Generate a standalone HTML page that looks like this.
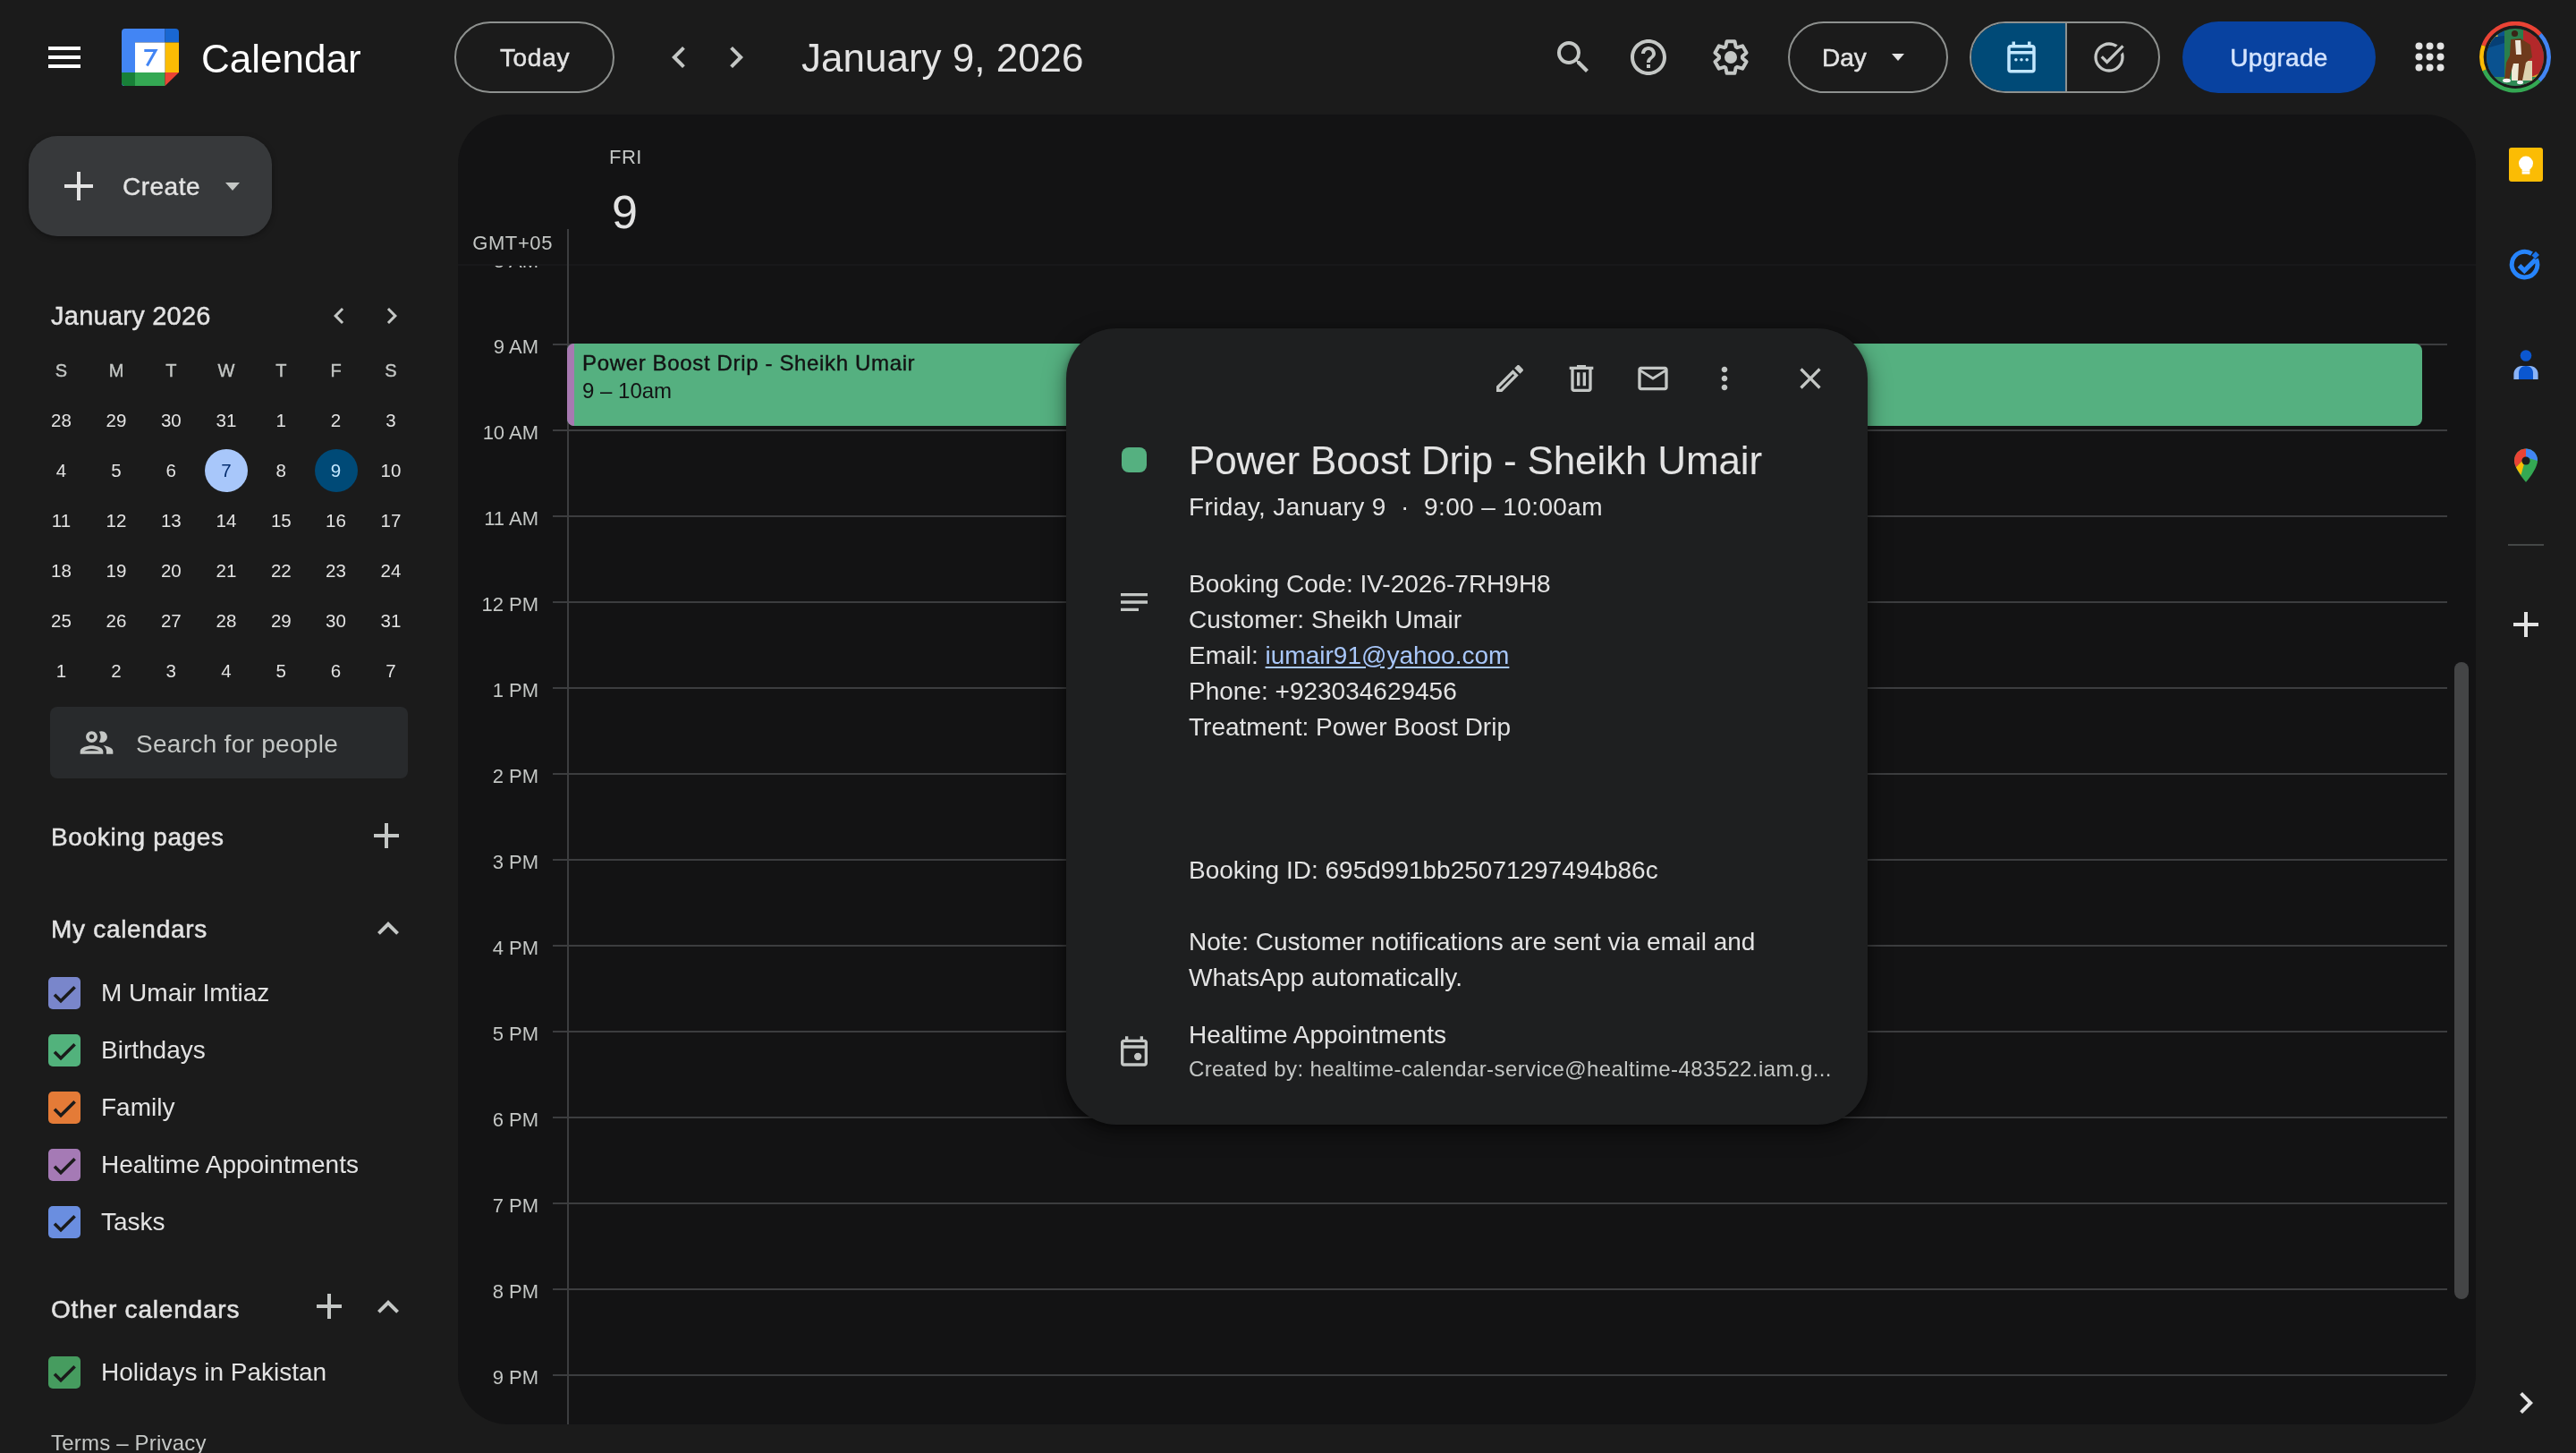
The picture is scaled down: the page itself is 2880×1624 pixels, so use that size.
<!DOCTYPE html>
<html><head><meta charset="utf-8"><title>Calendar</title>
<style>
body{will-change:transform;}
html,body{margin:0;padding:0;width:2880px;height:1624px;overflow:hidden;background:#1b1b1b;font-family:"Liberation Sans", sans-serif;}
.t{position:absolute;white-space:nowrap;}
.r{position:absolute;}
</style></head><body>

<svg class="r" style="left:48px;top:40px" width="48" height="48" viewBox="0 0 24 24"><path fill="#ffffff" d="M3 18h18v-2H3v2zm0-5h18v-2H3v2zm0-7v2h18V6H3z"/></svg>
<svg class="r" style="left:136px;top:32px" width="64" height="64" viewBox="0 0 64 64">
<path d="M4 0h44.5v15.5H15v49H4a4 4 0 0 1-4-4V4a4 4 0 0 1 4-4z" fill="#4285f4"/>
<path d="M48.5 0H60a4 4 0 0 1 4 4v11.5H48.5z" fill="#1967d2"/>
<rect x="48.5" y="15.5" width="15.5" height="33.5" fill="#fbbc04"/>
<rect x="15" y="49" width="33.5" height="15" fill="#34a853"/>
<path d="M0 49h15v15H4a4 4 0 0 1-4-4z" fill="#188038"/>
<path d="M48.5 49H64L48.5 64z" fill="#ea4335"/>
<rect x="15" y="15.5" width="33.5" height="33.5" fill="#fff"/>
<path d="M25.3 24.6H38L28.4 41.5" stroke="#4285f4" stroke-width="3" fill="none"/>
</svg>
<div class="t" style="left:225px;top:44.0px;font-size:44px;line-height:44px;color:#ffffff;">Calendar</div>
<div class="r" style="left:508px;top:24px;width:175px;height:76px;border:2px solid #8e918f;border-radius:40px;"></div>
<div class="t" style="left:509px;top:50.5px;font-size:28px;line-height:28px;color:#e3e3e3;text-align:center;width:178px;letter-spacing:0.7px;-webkit-text-stroke:0.5px #e3e3e3;">Today</div>
<svg class="r" style="left:735px;top:40px" width="48" height="48" viewBox="0 0 24 24"><path fill="#c4c7c5" d="M15.41 7.41L14 6l-6 6 6 6 1.41-1.41L10.83 12z"/></svg>
<svg class="r" style="left:799px;top:40px" width="48" height="48" viewBox="0 0 24 24"><path fill="#c4c7c5" d="M10 6L8.59 7.41 13.17 12l-4.58 4.59L10 18l6-6z"/></svg>
<div class="t" style="left:896px;top:43.0px;font-size:44px;line-height:44px;color:#e3e3e3;">January 9, 2026</div>
<svg class="r" style="left:1735px;top:40px" width="48" height="48" viewBox="0 0 24 24"><path fill="#c4c7c5" d="M15.5 14h-.79l-.28-.27A6.471 6.471 0 0 0 16 9.5 6.5 6.5 0 1 0 9.5 16c1.61 0 3.09-.59 4.23-1.57l.27.28v.79l5 4.99L20.49 19l-4.99-5zm-6 0C7.01 14 5 11.99 5 9.5S7.01 5 9.5 5 14 7.01 14 9.5 11.99 14 9.5 14z"/></svg>
<svg class="r" style="left:1819px;top:40px" width="48" height="48" viewBox="0 0 24 24"><path fill="#c4c7c5" d="M11 18h2v-2h-2v2zm1-16C6.48 2 2 6.48 2 12s4.48 10 10 10 10-4.48 10-10S17.52 2 12 2zm0 18c-4.41 0-8-3.59-8-8s3.59-8 8-8 8 3.59 8 8-3.59 8-8 8zm0-14c-2.21 0-4 1.790-4 4h2c0-1.1.9-2 2-2s2 .9 2 2c0 2-3 1.75-3 5h2c0-2.250 3-2.5 3-5 0-2.21-1.79-4-4-4z"/></svg>
<svg class="r" style="left:1911px;top:40px" width="48" height="48" viewBox="0 0 48 48"><path d="M18.30 12.32 L19.57 6.24 L28.43 6.24 L29.70 12.32 L31.27 13.22 L37.16 11.29 L41.59 18.96 L36.97 23.09 L36.97 24.91 L41.59 29.04 L37.16 36.71 L31.27 34.78 L29.70 35.68 L28.43 41.76 L19.57 41.76 L18.30 35.68 L16.73 34.78 L10.84 36.71 L6.41 29.04 L11.03 24.91 L11.03 23.09 L6.41 18.96 L10.84 11.29 L16.73 13.22Z" fill="none" stroke="#c4c7c5" stroke-width="4" stroke-linejoin="round"/><circle cx="24" cy="24" r="7" fill="#c4c7c5"/></svg>
<div class="r" style="left:1999px;top:24px;width:175px;height:76px;border:2px solid #8e918f;border-radius:40px;"></div>
<div class="t" style="left:2037px;top:50.5px;font-size:28px;line-height:28px;color:#e3e3e3;-webkit-text-stroke:0.5px #e3e3e3;">Day</div>
<svg class="r" style="left:2114px;top:59px" width="16" height="12" viewBox="0 0 16 12"><path d="M1 1h14l-7 8z" fill="#e3e3e3"/></svg>
<div class="r" style="left:2202px;top:24px;width:209px;height:76px;border:2px solid #8e918f;border-radius:40px;overflow:hidden;"><div style="position:absolute;left:0;top:0;width:105px;height:76px;background:#004a77"></div><div style="position:absolute;left:105px;top:0;width:2px;height:76px;background:#8e918f"></div></div>
<svg class="r" style="left:2239px;top:43px" width="42" height="42" viewBox="0 0 24 24"><path fill="#c2e7ff" d="M5 22c-.55 0-1.02-.2-1.41-.59A1.93 1.93 0 0 1 3 20V6c0-.55.2-1.02.59-1.41C3.98 4.2 4.45 4 5 4h1V2h2v2h8V2h2v2h1c.55 0 1.02.2 1.41.59.39.39.59.86.59 1.41v14c0 .55-.2 1.02-.59 1.41-.39.39-.86.59-1.41.59H5zm0-2h14V10H5v10zM5 8h14V6H5v2z"/><circle cx="8.5" cy="13.5" r="1" fill="#c2e7ff"/><circle cx="12" cy="13.5" r="1" fill="#c2e7ff"/><circle cx="15.5" cy="13.5" r="1" fill="#c2e7ff"/></svg>
<svg class="r" style="left:2338px;top:44px" width="40" height="40" viewBox="0 0 24 24"><path fill="#c4c7c5" d="M12 22c-1.38 0-2.68-.26-3.9-.79a10.1 10.1 0 0 1-3.18-2.14 10.1 10.1 0 0 1-2.14-3.17C2.26 14.68 2 13.38 2 12s.26-2.68.79-3.9a10.1 10.1 0 0 1 2.14-3.18A10.1 10.1 0 0 1 8.1 2.79C9.32 2.26 10.62 2 12 2c1.08 0 2.1.16 3.08.48.97.31 1.86.75 2.67 1.32L16.3 5.28c-.63-.4-1.31-.71-2.03-.94A7.73 7.73 0 0 0 12 4C9.78 4 7.9 4.78 6.34 6.34 4.78 7.9 4 9.78 4 12s.78 4.1 2.34 5.66C7.9 19.22 9.78 20 12 20s4.1-.78 5.66-2.34C19.22 16.1 20 14.22 20 12c0-.3-.02-.6-.05-.9a7.4 7.4 0 0 0-.15-.88l1.63-1.62c.18.53.33 1.08.42 1.65.1.57.15 1.15.15 1.75 0 1.38-.26 2.68-.79 3.9a10.1 10.1 0 0 1-2.14 3.18 10.1 10.1 0 0 1-3.17 2.14c-1.22.52-2.52.78-3.9.78zm-1.4-5.4l-4.25-4.25 1.4-1.4 2.85 2.85 10-10.03 1.4 1.4L10.6 16.6z"/></svg>
<div class="r" style="left:2440px;top:24px;width:216px;height:80px;background:#0842a0;border-radius:40px;"></div>
<div class="t" style="left:2440px;top:50.5px;font-size:28px;line-height:28px;color:#d3e3fd;text-align:center;width:216px;letter-spacing:0.3px;-webkit-text-stroke:0.5px #d3e3fd;">Upgrade</div>
<svg class="r" style="left:2700px;top:47px" width="33" height="33" viewBox="-0.5 -0.5 33 33"><circle cx="4" cy="4" r="4" fill="#e3e3e3"/><circle cx="4" cy="16" r="4" fill="#e3e3e3"/><circle cx="4" cy="28" r="4" fill="#e3e3e3"/><circle cx="16" cy="4" r="4" fill="#e3e3e3"/><circle cx="16" cy="16" r="4" fill="#e3e3e3"/><circle cx="16" cy="28" r="4" fill="#e3e3e3"/><circle cx="28" cy="4" r="4" fill="#e3e3e3"/><circle cx="28" cy="16" r="4" fill="#e3e3e3"/><circle cx="28" cy="28" r="4" fill="#e3e3e3"/></svg>
<svg class="r" style="left:2772px;top:24px" width="80" height="80" viewBox="0 0 80 80">
<defs><clipPath id="av"><circle cx="40" cy="40" r="32"/></clipPath></defs>
<path d="M4.6 27 A37.7 37.7 0 0 1 68 14.5" stroke="#ea4335" stroke-width="4.6" fill="none"/>
<path d="M68 14.5 A37.7 37.7 0 0 1 67 66" stroke="#4285f4" stroke-width="4.6" fill="none"/>
<path d="M67 66 A37.7 37.7 0 0 1 5.5 54.5" stroke="#34a853" stroke-width="4.6" fill="none"/>
<path d="M5.5 54.5 A37.7 37.7 0 0 1 4.6 27" stroke="#fbbc04" stroke-width="4.6" fill="none"/>
<g clip-path="url(#av)">
<rect x="0" y="0" width="80" height="80" fill="#2a7f4c"/>
<rect x="0" y="0" width="28" height="80" fill="#0a5290"/>
<path d="M8 22 L20 14 L22 21 L8 28z" fill="#d8b93a"/>
<path d="M8 18 L28 16 L28 24 L8 30z" fill="#063f74"/>
<rect x="49" y="0" width="31" height="80" fill="#b3282a"/>
<path d="M58 62 L72 56 L72 72 L58 72z" fill="#d6a82a"/>
<rect x="0" y="62" width="80" height="18" fill="#2f8a55"/>
<rect x="36" y="44" width="23" height="22" fill="#dcd2b0"/>
<rect x="36" y="44" width="9" height="22" fill="#efe9d6"/>
<circle cx="39.5" cy="13.5" r="3.6" fill="#3a2416"/>
<path d="M35 20 L46 19 L57 26 L59 40 L52 46 L48 66 L43 66 L44 47 L38 47 L33 66 L28 66 L30 46 L34 38z" fill="#6e3a1c"/>
<path d="M40 21 L46 21 L47 37 L41 37z" fill="#ece6da"/>
<ellipse cx="30.5" cy="66" rx="4.5" ry="2.2" fill="#f2f2f2"/>
<ellipse cx="45.5" cy="68" rx="3.5" ry="2.2" fill="#f2f2f2"/>
</g></svg>
<div class="r" style="left:32px;top:152px;width:272px;height:112px;background:#37393b;border-radius:32px;box-shadow:0 2px 6px rgba(0,0,0,.35);"></div>
<div class="r" style="left:72px;top:206px;width:32px;height:4px;background:#e3e3e3;border-radius:0px;"></div>
<div class="r" style="left:86px;top:192px;width:4px;height:32px;background:#e3e3e3;border-radius:0px;"></div>
<div class="t" style="left:137px;top:194.5px;font-size:28px;line-height:28px;color:#e3e3e3;letter-spacing:0.5px;-webkit-text-stroke:0.4px #e3e3e3;">Create</div>
<svg class="r" style="left:250px;top:201px" width="20" height="16" viewBox="0 0 20 16"><path d="M2 3h16l-8 9z" fill="#c4c7c5"/></svg>
<div class="t" style="left:57px;top:338.8px;font-size:29px;line-height:29px;color:#e3e3e3;letter-spacing:0.25px;-webkit-text-stroke:0.4px #e3e3e3;">January 2026</div>
<svg class="r" style="left:361px;top:334.5px" width="36" height="36" viewBox="0 0 24 24"><path fill="#c4c7c5" d="M15.41 7.41L14 6l-6 6 6 6 1.41-1.41L10.83 12z"/></svg>
<svg class="r" style="left:419.5px;top:334.5px" width="36" height="36" viewBox="0 0 24 24"><path fill="#c4c7c5" d="M10 6L8.59 7.41 13.17 12l-4.58 4.59L10 18l6-6z"/></svg>
<div class="t" style="left:38.5px;top:403.5px;font-size:20px;line-height:20px;color:#c4c7c5;text-align:center;width:60px;-webkit-text-stroke:0.4px #c4c7c5;">S</div>
<div class="t" style="left:100px;top:403.5px;font-size:20px;line-height:20px;color:#c4c7c5;text-align:center;width:60px;-webkit-text-stroke:0.4px #c4c7c5;">M</div>
<div class="t" style="left:161.3px;top:403.5px;font-size:20px;line-height:20px;color:#c4c7c5;text-align:center;width:60px;-webkit-text-stroke:0.4px #c4c7c5;">T</div>
<div class="t" style="left:223px;top:403.5px;font-size:20px;line-height:20px;color:#c4c7c5;text-align:center;width:60px;-webkit-text-stroke:0.4px #c4c7c5;">W</div>
<div class="t" style="left:284.3px;top:403.5px;font-size:20px;line-height:20px;color:#c4c7c5;text-align:center;width:60px;-webkit-text-stroke:0.4px #c4c7c5;">T</div>
<div class="t" style="left:345.5px;top:403.5px;font-size:20px;line-height:20px;color:#c4c7c5;text-align:center;width:60px;-webkit-text-stroke:0.4px #c4c7c5;">F</div>
<div class="t" style="left:407px;top:403.5px;font-size:20px;line-height:20px;color:#c4c7c5;text-align:center;width:60px;-webkit-text-stroke:0.4px #c4c7c5;">S</div>
<div class="t" style="left:38.5px;top:460.0px;font-size:20.5px;line-height:20.5px;color:#e3e3e3;text-align:center;width:60px;">28</div>
<div class="t" style="left:100px;top:460.0px;font-size:20.5px;line-height:20.5px;color:#e3e3e3;text-align:center;width:60px;">29</div>
<div class="t" style="left:161.3px;top:460.0px;font-size:20.5px;line-height:20.5px;color:#e3e3e3;text-align:center;width:60px;">30</div>
<div class="t" style="left:223px;top:460.0px;font-size:20.5px;line-height:20.5px;color:#e3e3e3;text-align:center;width:60px;">31</div>
<div class="t" style="left:284.3px;top:460.0px;font-size:20.5px;line-height:20.5px;color:#e3e3e3;text-align:center;width:60px;">1</div>
<div class="t" style="left:345.5px;top:460.0px;font-size:20.5px;line-height:20.5px;color:#e3e3e3;text-align:center;width:60px;">2</div>
<div class="t" style="left:407px;top:460.0px;font-size:20.5px;line-height:20.5px;color:#e3e3e3;text-align:center;width:60px;">3</div>
<div class="t" style="left:38.5px;top:516.0px;font-size:20.5px;line-height:20.5px;color:#e3e3e3;text-align:center;width:60px;">4</div>
<div class="t" style="left:100px;top:516.0px;font-size:20.5px;line-height:20.5px;color:#e3e3e3;text-align:center;width:60px;">5</div>
<div class="t" style="left:161.3px;top:516.0px;font-size:20.5px;line-height:20.5px;color:#e3e3e3;text-align:center;width:60px;">6</div>
<div class="r" style="left:229px;top:502px;width:48px;height:48px;background:#a8c7fa;border-radius:24px;"></div>
<div class="t" style="left:223px;top:516.0px;font-size:20.5px;line-height:20.5px;color:#062e6f;text-align:center;width:60px;">7</div>
<div class="t" style="left:284.3px;top:516.0px;font-size:20.5px;line-height:20.5px;color:#e3e3e3;text-align:center;width:60px;">8</div>
<div class="r" style="left:351.5px;top:502px;width:48px;height:48px;background:#004a77;border-radius:24px;"></div>
<div class="t" style="left:345.5px;top:516.0px;font-size:20.5px;line-height:20.5px;color:#c2e7ff;text-align:center;width:60px;">9</div>
<div class="t" style="left:407px;top:516.0px;font-size:20.5px;line-height:20.5px;color:#e3e3e3;text-align:center;width:60px;">10</div>
<div class="t" style="left:38.5px;top:572.0px;font-size:20.5px;line-height:20.5px;color:#e3e3e3;text-align:center;width:60px;">11</div>
<div class="t" style="left:100px;top:572.0px;font-size:20.5px;line-height:20.5px;color:#e3e3e3;text-align:center;width:60px;">12</div>
<div class="t" style="left:161.3px;top:572.0px;font-size:20.5px;line-height:20.5px;color:#e3e3e3;text-align:center;width:60px;">13</div>
<div class="t" style="left:223px;top:572.0px;font-size:20.5px;line-height:20.5px;color:#e3e3e3;text-align:center;width:60px;">14</div>
<div class="t" style="left:284.3px;top:572.0px;font-size:20.5px;line-height:20.5px;color:#e3e3e3;text-align:center;width:60px;">15</div>
<div class="t" style="left:345.5px;top:572.0px;font-size:20.5px;line-height:20.5px;color:#e3e3e3;text-align:center;width:60px;">16</div>
<div class="t" style="left:407px;top:572.0px;font-size:20.5px;line-height:20.5px;color:#e3e3e3;text-align:center;width:60px;">17</div>
<div class="t" style="left:38.5px;top:628.0px;font-size:20.5px;line-height:20.5px;color:#e3e3e3;text-align:center;width:60px;">18</div>
<div class="t" style="left:100px;top:628.0px;font-size:20.5px;line-height:20.5px;color:#e3e3e3;text-align:center;width:60px;">19</div>
<div class="t" style="left:161.3px;top:628.0px;font-size:20.5px;line-height:20.5px;color:#e3e3e3;text-align:center;width:60px;">20</div>
<div class="t" style="left:223px;top:628.0px;font-size:20.5px;line-height:20.5px;color:#e3e3e3;text-align:center;width:60px;">21</div>
<div class="t" style="left:284.3px;top:628.0px;font-size:20.5px;line-height:20.5px;color:#e3e3e3;text-align:center;width:60px;">22</div>
<div class="t" style="left:345.5px;top:628.0px;font-size:20.5px;line-height:20.5px;color:#e3e3e3;text-align:center;width:60px;">23</div>
<div class="t" style="left:407px;top:628.0px;font-size:20.5px;line-height:20.5px;color:#e3e3e3;text-align:center;width:60px;">24</div>
<div class="t" style="left:38.5px;top:684.0px;font-size:20.5px;line-height:20.5px;color:#e3e3e3;text-align:center;width:60px;">25</div>
<div class="t" style="left:100px;top:684.0px;font-size:20.5px;line-height:20.5px;color:#e3e3e3;text-align:center;width:60px;">26</div>
<div class="t" style="left:161.3px;top:684.0px;font-size:20.5px;line-height:20.5px;color:#e3e3e3;text-align:center;width:60px;">27</div>
<div class="t" style="left:223px;top:684.0px;font-size:20.5px;line-height:20.5px;color:#e3e3e3;text-align:center;width:60px;">28</div>
<div class="t" style="left:284.3px;top:684.0px;font-size:20.5px;line-height:20.5px;color:#e3e3e3;text-align:center;width:60px;">29</div>
<div class="t" style="left:345.5px;top:684.0px;font-size:20.5px;line-height:20.5px;color:#e3e3e3;text-align:center;width:60px;">30</div>
<div class="t" style="left:407px;top:684.0px;font-size:20.5px;line-height:20.5px;color:#e3e3e3;text-align:center;width:60px;">31</div>
<div class="t" style="left:38.5px;top:740.0px;font-size:20.5px;line-height:20.5px;color:#e3e3e3;text-align:center;width:60px;">1</div>
<div class="t" style="left:100px;top:740.0px;font-size:20.5px;line-height:20.5px;color:#e3e3e3;text-align:center;width:60px;">2</div>
<div class="t" style="left:161.3px;top:740.0px;font-size:20.5px;line-height:20.5px;color:#e3e3e3;text-align:center;width:60px;">3</div>
<div class="t" style="left:223px;top:740.0px;font-size:20.5px;line-height:20.5px;color:#e3e3e3;text-align:center;width:60px;">4</div>
<div class="t" style="left:284.3px;top:740.0px;font-size:20.5px;line-height:20.5px;color:#e3e3e3;text-align:center;width:60px;">5</div>
<div class="t" style="left:345.5px;top:740.0px;font-size:20.5px;line-height:20.5px;color:#e3e3e3;text-align:center;width:60px;">6</div>
<div class="t" style="left:407px;top:740.0px;font-size:20.5px;line-height:20.5px;color:#e3e3e3;text-align:center;width:60px;">7</div>
<div class="r" style="left:56px;top:790px;width:400px;height:80px;background:#282a2c;border-radius:8px;"></div>
<svg class="r" style="left:85.8px;top:808.3px" width="44" height="44" viewBox="0 0 24 24"><path fill="#c4c7c5" d="M9 13.75c-2.34 0-7 1.17-7 3.5V19h14v-1.75c0-2.33-4.66-3.5-7-3.5zM4.34 17c.84-.58 2.87-1.25 4.66-1.25s3.82.67 4.66 1.25H4.34zM9 12c1.93 0 3.5-1.57 3.5-3.5S10.93 5 9 5 5.5 6.57 5.5 8.5 7.07 12 9 12zm0-5c.83 0 1.5.67 1.5 1.5S9.83 10 9 10s-1.5-.67-1.5-1.5S8.17 7 9 7zm7.04 6.81c1.16.84 1.96 1.96 1.96 3.44V19h4v-1.75c0-2.02-3.5-3.17-5.96-3.44zM15 12c1.93 0 3.5-1.57 3.5-3.5S16.930 5 15 5c-.54 0-1.04.13-1.5.35.63.89 1 1.98 1 3.15s-.37 2.26-1 3.15c.46.22.96.35 1.5.35z"/></svg>
<div class="t" style="left:152px;top:817.5px;font-size:28px;line-height:28px;color:#c4c7c5;letter-spacing:0.3px;">Search for people</div>
<div class="t" style="left:57px;top:921.5px;font-size:28px;line-height:28px;color:#e3e3e3;letter-spacing:0.65px;-webkit-text-stroke:0.5px #e3e3e3;">Booking pages</div>
<svg class="r" style="left:408px;top:910px" width="48" height="48" viewBox="0 0 24 24"><path fill="#c4c7c5" d="M19 13h-6v6h-2v-6H5v-2h6V5h2v6h6v2z"/></svg>
<div class="t" style="left:57px;top:1025.0px;font-size:28px;line-height:28px;color:#e3e3e3;letter-spacing:0.7px;-webkit-text-stroke:0.5px #e3e3e3;">My calendars</div>
<svg class="r" style="left:410px;top:1014px" width="48" height="48" viewBox="0 0 24 24"><path fill="#c4c7c5" d="M12 8l-6 6 1.41 1.41L12 10.83l4.59 4.58L18 14z"/></svg>
<svg class="r" style="left:54px;top:1092px" width="36" height="36" viewBox="0 0 36 36"><rect width="36" height="36" rx="5" fill="#7986cb"/><path d="M7 19.8l7 7 15.6-15.6" stroke="#1b1b1b" stroke-width="3.6" fill="none"/></svg>
<div class="t" style="left:113px;top:1095.5px;font-size:28px;line-height:28px;color:#e3e3e3;">M Umair Imtiaz</div>
<svg class="r" style="left:54px;top:1156px" width="36" height="36" viewBox="0 0 36 36"><rect width="36" height="36" rx="5" fill="#52b27c"/><path d="M7 19.8l7 7 15.6-15.6" stroke="#1b1b1b" stroke-width="3.6" fill="none"/></svg>
<div class="t" style="left:113px;top:1159.5px;font-size:28px;line-height:28px;color:#e3e3e3;">Birthdays</div>
<svg class="r" style="left:54px;top:1220px" width="36" height="36" viewBox="0 0 36 36"><rect width="36" height="36" rx="5" fill="#e47b37"/><path d="M7 19.8l7 7 15.6-15.6" stroke="#1b1b1b" stroke-width="3.6" fill="none"/></svg>
<div class="t" style="left:113px;top:1223.5px;font-size:28px;line-height:28px;color:#e3e3e3;">Family</div>
<svg class="r" style="left:54px;top:1284px" width="36" height="36" viewBox="0 0 36 36"><rect width="36" height="36" rx="5" fill="#a57ab5"/><path d="M7 19.8l7 7 15.6-15.6" stroke="#1b1b1b" stroke-width="3.6" fill="none"/></svg>
<div class="t" style="left:113px;top:1287.5px;font-size:28px;line-height:28px;color:#e3e3e3;">Healtime Appointments</div>
<svg class="r" style="left:54px;top:1348px" width="36" height="36" viewBox="0 0 36 36"><rect width="36" height="36" rx="5" fill="#6a8ee0"/><path d="M7 19.8l7 7 15.6-15.6" stroke="#1b1b1b" stroke-width="3.6" fill="none"/></svg>
<div class="t" style="left:113px;top:1351.5px;font-size:28px;line-height:28px;color:#e3e3e3;">Tasks</div>
<svg class="r" style="left:54px;top:1516px" width="36" height="36" viewBox="0 0 36 36"><rect width="36" height="36" rx="5" fill="#469c5f"/><path d="M7 19.8l7 7 15.6-15.6" stroke="#1b1b1b" stroke-width="3.6" fill="none"/></svg>
<div class="t" style="left:113px;top:1519.5px;font-size:28px;line-height:28px;color:#e3e3e3;">Holidays in Pakistan</div>
<div class="t" style="left:57px;top:1449.5px;font-size:28px;line-height:28px;color:#e3e3e3;letter-spacing:0.8px;-webkit-text-stroke:0.5px #e3e3e3;">Other calendars</div>
<svg class="r" style="left:344px;top:1436px" width="48" height="48" viewBox="0 0 24 24"><path fill="#c4c7c5" d="M19 13h-6v6h-2v-6H5v-2h6V5h2v6h6v2z"/></svg>
<svg class="r" style="left:410px;top:1437px" width="48" height="48" viewBox="0 0 24 24"><path fill="#c4c7c5" d="M12 8l-6 6 1.41 1.41L12 10.83l4.59 4.58L18 14z"/></svg>
<div class="t" style="left:57px;top:1600.8px;font-size:24px;line-height:24px;color:#c4c7c5;letter-spacing:0.2px;">Terms – Privacy</div>
<div class="r" style="left:512px;top:128px;width:2256px;height:1464px;background:#131314;border-radius:56px;overflow:hidden;">
<div class="t" style="left:169px;top:36.5px;font-size:22px;line-height:22px;color:#c4c7c5;letter-spacing:0.5px;">FRI</div>
<div class="t" style="left:172px;top:83.3px;font-size:52px;line-height:52px;color:#e3e3e3;">9</div>
<div class="t" style="left:-112px;width:218px;text-align:right;top:132.5px;font-size:22px;line-height:22px;color:#c4c7c5;letter-spacing:0.6px;">GMT+05</div>
<div class="r" style="left:0;top:167px;width:2256px;height:2px;background:#18181a"></div>
<div class="r" style="left:0;top:169px;width:2256px;height:1400px;overflow:hidden">
<div class="t" style="left:-112px;width:202px;text-align:right;top:-16.5px;font-size:22px;line-height:22px;color:#c4c7c5;">8 AM</div>
<div class="t" style="left:-112px;width:202px;text-align:right;top:79.5px;font-size:22px;line-height:22px;color:#c4c7c5;">9 AM</div>
<div class="r" style="left:106px;top:87px;width:2118px;height:2px;background:#3c3d3f"></div>
<div class="t" style="left:-112px;width:202px;text-align:right;top:175.5px;font-size:22px;line-height:22px;color:#c4c7c5;">10 AM</div>
<div class="r" style="left:106px;top:183px;width:2118px;height:2px;background:#3c3d3f"></div>
<div class="t" style="left:-112px;width:202px;text-align:right;top:271.5px;font-size:22px;line-height:22px;color:#c4c7c5;">11 AM</div>
<div class="r" style="left:106px;top:279px;width:2118px;height:2px;background:#3c3d3f"></div>
<div class="t" style="left:-112px;width:202px;text-align:right;top:367.5px;font-size:22px;line-height:22px;color:#c4c7c5;">12 PM</div>
<div class="r" style="left:106px;top:375px;width:2118px;height:2px;background:#3c3d3f"></div>
<div class="t" style="left:-112px;width:202px;text-align:right;top:463.5px;font-size:22px;line-height:22px;color:#c4c7c5;">1 PM</div>
<div class="r" style="left:106px;top:471px;width:2118px;height:2px;background:#3c3d3f"></div>
<div class="t" style="left:-112px;width:202px;text-align:right;top:559.5px;font-size:22px;line-height:22px;color:#c4c7c5;">2 PM</div>
<div class="r" style="left:106px;top:567px;width:2118px;height:2px;background:#3c3d3f"></div>
<div class="t" style="left:-112px;width:202px;text-align:right;top:655.5px;font-size:22px;line-height:22px;color:#c4c7c5;">3 PM</div>
<div class="r" style="left:106px;top:663px;width:2118px;height:2px;background:#3c3d3f"></div>
<div class="t" style="left:-112px;width:202px;text-align:right;top:751.5px;font-size:22px;line-height:22px;color:#c4c7c5;">4 PM</div>
<div class="r" style="left:106px;top:759px;width:2118px;height:2px;background:#3c3d3f"></div>
<div class="t" style="left:-112px;width:202px;text-align:right;top:847.5px;font-size:22px;line-height:22px;color:#c4c7c5;">5 PM</div>
<div class="r" style="left:106px;top:855px;width:2118px;height:2px;background:#3c3d3f"></div>
<div class="t" style="left:-112px;width:202px;text-align:right;top:943.5px;font-size:22px;line-height:22px;color:#c4c7c5;">6 PM</div>
<div class="r" style="left:106px;top:951px;width:2118px;height:2px;background:#3c3d3f"></div>
<div class="t" style="left:-112px;width:202px;text-align:right;top:1039.5px;font-size:22px;line-height:22px;color:#c4c7c5;">7 PM</div>
<div class="r" style="left:106px;top:1047px;width:2118px;height:2px;background:#3c3d3f"></div>
<div class="t" style="left:-112px;width:202px;text-align:right;top:1135.5px;font-size:22px;line-height:22px;color:#c4c7c5;">8 PM</div>
<div class="r" style="left:106px;top:1143px;width:2118px;height:2px;background:#3c3d3f"></div>
<div class="t" style="left:-112px;width:202px;text-align:right;top:1231.5px;font-size:22px;line-height:22px;color:#c4c7c5;">9 PM</div>
<div class="r" style="left:106px;top:1239px;width:2118px;height:2px;background:#3c3d3f"></div>
<div class="t" style="left:-112px;width:202px;text-align:right;top:1327.5px;font-size:22px;line-height:22px;color:#c4c7c5;">10 PM</div>
<div class="r" style="left:106px;top:1335px;width:2118px;height:2px;background:#3c3d3f"></div>
</div>
<div class="r" style="left:122px;top:128px;width:2px;height:1400px;background:#3c3d3f"></div>
</div>
<div class="r" style="left:634px;top:384px;width:2074px;height:92px;background:#55b080;border-radius:8px;overflow:hidden;"><div style="position:absolute;left:0;top:0;width:8px;height:92px;background:#a779b1"></div></div>
<div class="t" style="left:651px;top:394.3px;font-size:24px;line-height:24px;color:#131314;letter-spacing:0.65px;-webkit-text-stroke:0.4px #131314;">Power Boost Drip - Sheikh Umair</div>
<div class="t" style="left:651px;top:424.8px;font-size:24px;line-height:24px;color:#131314;">9 – 10am</div>
<div class="r" style="left:2744px;top:740px;width:16px;height:712px;background:#444546;border-radius:8px;"></div>
<svg class="r" style="left:2805px;top:165px" width="38" height="38" viewBox="0 0 38 38"><rect width="38" height="38" rx="3" fill="#fbbc04"/><circle cx="19" cy="17.6" r="8" fill="#fff"/><rect x="14.6" y="24" width="8.8" height="2.5" fill="#fff"/><rect x="14.6" y="26.6" width="8.8" height="3" fill="#fff"/></svg>
<svg class="r" style="left:2804px;top:276px" width="40" height="40" viewBox="0 0 40 40"><path d="M31.5 13.5 A14.3 14.3 0 1 1 26.5 7.7" stroke="#2684fc" stroke-width="5" fill="none"/><path d="M12.5 20.8l5.8 5.8 12.5-12.5" stroke="#2684fc" stroke-width="5.2" fill="none"/><path d="M31 5 l4 4 -4.5 4.5 -4 -4z" fill="#1a73e8"/></svg>
<svg class="r" style="left:2804px;top:387px" width="40" height="40" viewBox="0 0 40 40"><circle cx="20" cy="10.5" r="6.3" fill="#0b57d0"/><path d="M6.4 37v-6c0-5 4-9 9-9h9.2c5 0 9 4 9 9v6z" fill="#8ab4f8"/><path d="M12 37v-7c0-4.5 3-8 8-8s8 3.5 8 8v7z" fill="#0b57d0"/></svg>
<svg class="r" style="left:2806px;top:500px" width="38" height="42" viewBox="0 0 38 42"><path d="M18 1.5C10.5 1.5 5 7.5 5 15c0 9 13 24 13 24s13-15 13-24C31 7.5 25.5 1.5 18 1.5z" fill="#34a853"/><path d="M18 1.5C10.5 1.5 5 7.5 5 15c0 2.5.8 5 2 7.3L18 11z" fill="#ea4335"/><path d="M7 22.3c1.5 3 3.5 6 5.5 8.7L18 11z" fill="#fbbc04"/><path d="M18 1.5c7.5 0 13 6 13 13.5L18 11z" fill="#4285f4"/><circle cx="18" cy="15" r="4.6" fill="#1b1b1b"/></svg>
<div class="r" style="left:2804px;top:608px;width:40px;height:2px;background:#444746;border-radius:0px;"></div>
<svg class="r" style="left:2800px;top:674px" width="48" height="48" viewBox="0 0 24 24"><path fill="#e3e3e3" d="M19 13h-6v6h-2v-6H5v-2h6V5h2v6h6v2z"/></svg>
<svg class="r" style="left:2800px;top:1544px" width="48" height="48" viewBox="0 0 24 24"><path fill="#e3e3e3" d="M10 6L8.59 7.41 13.17 12l-4.58 4.59L10 18l6-6z"/></svg>
<div class="r" style="left:1192px;top:367px;width:896px;height:890px;background:#1e1f20;border-radius:56px;box-shadow:0 8px 24px rgba(0,0,0,.5),0 2px 6px rgba(0,0,0,.3);"></div>
<svg class="r" style="left:1668px;top:402.7px" width="40" height="40" viewBox="0 0 24 24"><path fill="#c4c7c5" d="M3 17.25V21h3.75L17.81 9.94l-3.75-3.75L3 17.25zM5.920 19H5v-.92l9.06-9.06.92.92L5.92 19zM20.71 5.63l-2.34-2.34c-.2-.2-.45-.29-.71-.29s-.51.1-.7.29l-1.83 1.83 3.75 3.75 1.83-1.83a.996.996 0 0 0 0-1.41z"/></svg>
<svg class="r" style="left:1748px;top:403px" width="40" height="40" viewBox="0 -960 960 960"><path fill="#c4c7c5" d="M280-120q-33 0-56.5-23.5T200-200v-520h-40v-80h200v-40h240v40h200v80h-40v520q0 33-23.5 56.5T680-120H280Zm400-600H280v520h400v-520ZM360-280h80v-360h-80v360Zm160 0h80v-360h-80v360Z"/></svg>
<svg class="r" style="left:1828px;top:403px" width="40" height="40" viewBox="0 0 24 24"><path fill="#c4c7c5" d="M22 6c0-1.1-.9-2-2-2H4c-1.1 0-2 .9-2 2v12c0 1.1.9 2 2 2h16c1.1 0 2-.9 2-2V6zm-2 0l-8 5-8-5h16zm0 12H4V8l8 5 8-5v10z"/></svg>
<svg class="r" style="left:1908px;top:403px" width="40" height="40" viewBox="0 0 24 24"><path fill="#c4c7c5" d="M12 8c1.1 0 2-.9 2-2s-.9-2-2-2-2 .9-2 2 .9 2 2 2zm0 2c-1.1 0-2 .9-2 2s.9 2 2 2 2-.9 2-2-.9-2-2-2zm0 6c-1.1 0-2 .9-2 2s.9 2 2 2 2-.9 2-2-.9-2-2-2z"/></svg>
<svg class="r" style="left:2004px;top:403px" width="40" height="40" viewBox="0 0 24 24"><path fill="#c4c7c5" d="M19 6.41L17.590 5 12 10.59 6.41 5 5 6.41 10.59 12 5 17.59 6.41 19 12 13.41 17.59 19 19 17.59 13.41 12z"/></svg>
<div class="r" style="left:1254px;top:500px;width:28px;height:28px;background:#55b080;border-radius:8px;"></div>
<div class="t" style="left:1329px;top:493.0px;font-size:44px;line-height:44px;color:#e3e3e3;letter-spacing:-0.15px;">Power Boost Drip - Sheikh Umair</div>
<div class="t" style="left:1329px;top:552.5px;font-size:28px;line-height:28px;color:#e3e3e3;letter-spacing:0.38px;">Friday, January 9 &nbsp;·&nbsp; 9:00 – 10:00am</div>
<svg class="r" style="left:1248px;top:653px" width="40" height="40" viewBox="0 -960 960 960"><path fill="#c4c7c5" d="M120-240v-80h480v80H120Zm0-200v-80h720v80H120Zm0-200v-80h720v80H120Z"/></svg>
<div class="t" style="left:1329px;top:639.0px;font-size:28px;line-height:28px;color:#e3e3e3;">Booking Code: IV-2026-7RH9H8</div>
<div class="t" style="left:1329px;top:678.5px;font-size:28px;line-height:28px;color:#e3e3e3;">Customer: Sheikh Umair</div>
<div class="t" style="left:1329px;top:718.5px;font-size:28px;line-height:28px;color:#e3e3e3;">Email: <span style="color:#a8c7fa;text-decoration:underline;text-underline-offset:3px">iumair91@yahoo.com</span></div>
<div class="t" style="left:1329px;top:758.5px;font-size:28px;line-height:28px;color:#e3e3e3;">Phone: +923034629456</div>
<div class="t" style="left:1329px;top:799.0px;font-size:28px;line-height:28px;color:#e3e3e3;">Treatment: Power Boost Drip</div>
<div class="t" style="left:1329px;top:959.0px;font-size:28px;line-height:28px;color:#e3e3e3;">Booking ID: 695d991bb25071297494b86c</div>
<div class="t" style="left:1329px;top:1038.5px;font-size:28px;line-height:28px;color:#e3e3e3;">Note: Customer notifications are sent via email and</div>
<div class="t" style="left:1329px;top:1079.0px;font-size:28px;line-height:28px;color:#e3e3e3;">WhatsApp automatically.</div>
<svg class="r" style="left:1247.5px;top:1154.7px" width="40" height="40" viewBox="0 -960 960 960"><path fill="#c4c7c5" d="M580-240q-42 0-71-29t-29-71q0-42 29-71t71-29q42 0 71 29t29 71q0 42-29 71t-71 29ZM200-80q-33 0-56.5-23.5T120-160v-560q0-33 23.5-56.5T200-800h40v-80h80v80h320v-80h80v80h40q33 0 56.5 23.5T840-720v560q0 33-23.5 56.5T760-80H200Zm0-80h560v-400H200v400Zm0-480h560v-80H200v80Z"/></svg>
<div class="t" style="left:1329px;top:1142.5px;font-size:28px;line-height:28px;color:#e3e3e3;">Healtime Appointments</div>
<div class="t" style="left:1329px;top:1182.8px;font-size:24px;line-height:24px;color:#c4c7c5;letter-spacing:0.4px;">Created by: healtime-calendar-service@healtime-483522.iam.g...</div>
</body></html>
